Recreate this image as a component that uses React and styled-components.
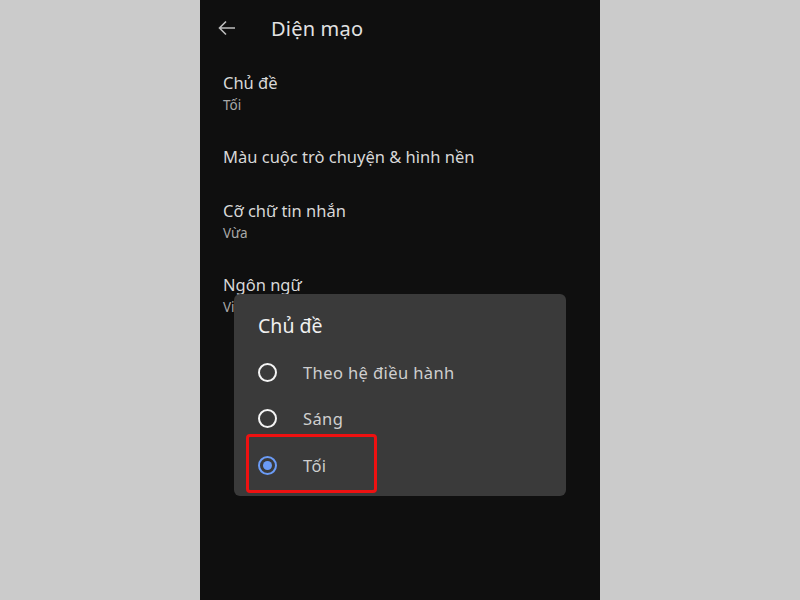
import React from "react";
import styled, { createGlobalStyle } from "styled-components";

const GlobalStyle = createGlobalStyle`
  html, body {
    margin: 0;
    padding: 0;
    background: #cbcbcb;
    font-family: "Noto Sans", "Open Sans", sans-serif;
  }
`;

const Page = styled.div`
  width: 800px;
  height: 600px;
  display: flex;
  justify-content: center;
`;

const Screen = styled.div`
  position: relative;
  width: 400px;
  height: 600px;
  background: #0f0f0f;
  overflow: hidden;
`;

const TopBar = styled.div`
  display: flex;
  align-items: center;
  height: 56px;
  padding-left: 18px;
`;

const BackButton = styled.div`
  width: 18px;
  height: 18px;
  display: flex;
  align-items: center;
  margin-right: 35px;
`;

const Title = styled.div`
  color: #e2e2e2;
  font-size: 20px;
  letter-spacing: 0.2px;
`;

const List = styled.div`
  display: flex;
  flex-direction: column;
  padding-left: 23px;
  margin-top: 16px;
`;

const Item = styled.div`
  display: flex;
  flex-direction: column;
  height: ${(p) => p.$h}px;
`;

const ItemTitle = styled.div`
  color: #d8d8d8;
  font-size: 16.5px;
  line-height: 22px;
`;

const ItemSub = styled.div`
  color: #a8a8a8;
  font-size: 13.5px;
  line-height: 22px;
`;

const Dialog = styled.div`
  position: absolute;
  left: 34px;
  top: 294px;
  width: 332px;
  height: 202px;
  background: #3a3a3a;
  border-radius: 6px;
  box-sizing: border-box;
  padding: 19px 0 0 24px;
`;

const DialogTitle = styled.div`
  color: #f0f0f0;
  font-size: 19.5px;
  line-height: 26px;
  margin-bottom: 10px;
`;

const Options = styled.div`
  display: flex;
  flex-direction: column;
`;

const Option = styled.div`
  position: relative;
  display: flex;
  align-items: center;
  height: 46.5px;
  ${(p) =>
    p.$marked &&
    `
    &::after {
      content: "";
      position: absolute;
      left: -12px;
      top: -8px;
      width: 131px;
      height: 59px;
      box-sizing: border-box;
      border: 3px solid #ee1111;
      border-radius: 4px;
    }
  `}
`;

const Radio = styled.div`
  width: 19px;
  height: 19px;
  box-sizing: border-box;
  border-radius: 50%;
  border: 2px solid ${(p) => (p.$checked ? "#6b9bf5" : "#f4f4f4")};
  display: flex;
  align-items: center;
  justify-content: center;
  margin-right: 26px;
  &::before {
    content: "";
    width: 9px;
    height: 9px;
    border-radius: 50%;
    background: ${(p) => (p.$checked ? "#6b9bf5" : "transparent")};
  }
`;

const OptionLabel = styled.div`
  color: #cfcfcf;
  font-size: 16.5px;
  letter-spacing: 0.4px;
`;

const items = [
  { title: "Chủ đề", sub: "Tối", h: 74 },
  { title: "Màu cuộc trò chuyện & hình nền", h: 54 },
  { title: "Cỡ chữ tin nhắn", sub: "Vừa", h: 74 },
  { title: "Ngôn ngữ", sub: "Việt", h: 74 },
];

const options = ["Theo hệ điều hành", "Sáng", "Tối"];

export default function App() {
  return (
    <>
      <GlobalStyle />
      <Page>
        <Screen>
          <TopBar>
            <BackButton>
              <svg width="18" height="16" viewBox="0 0 18 16">
                <path
                  d="M17 8H1.5M8 1.5L1.5 8L8 14.5"
                  fill="none"
                  stroke="#bdbdbd"
                  strokeWidth="1.6"
                />
              </svg>
            </BackButton>
            <Title>Diện mạo</Title>
          </TopBar>
          <List>
            {items.map((it) => (
              <Item key={it.title} $h={it.h}>
                <ItemTitle>{it.title}</ItemTitle>
                {it.sub && <ItemSub>{it.sub}</ItemSub>}
              </Item>
            ))}
          </List>
          <Dialog>
            <DialogTitle>Chủ đề</DialogTitle>
            <Options>
              {options.map((o, i) => (
                <Option key={o} $marked={i === 2}>
                  <Radio $checked={i === 2} />
                  <OptionLabel>{o}</OptionLabel>
                </Option>
              ))}
            </Options>
          </Dialog>
        </Screen>
      </Page>
    </>
  );
}
